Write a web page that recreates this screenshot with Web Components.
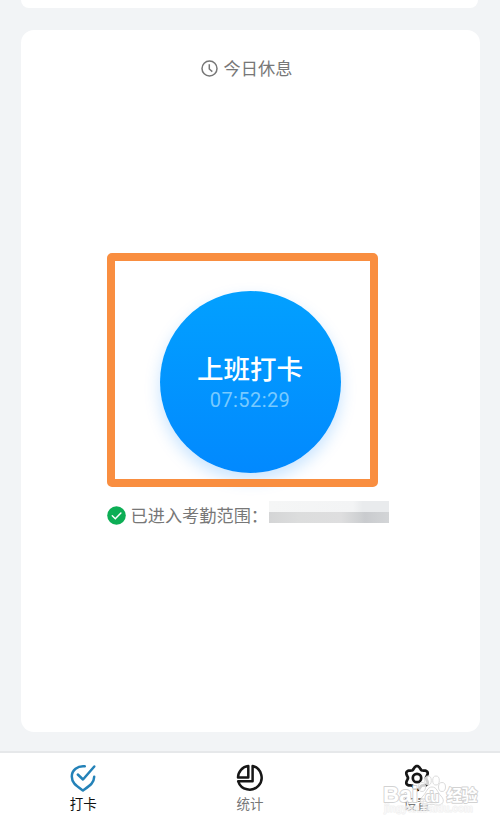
<!DOCTYPE html>
<html lang="zh-CN">
<head>
<meta charset="UTF-8">
<title>打卡</title>
<style>
    html, body {
        margin: 0;
        height: 100%;
        overflow: hidden;
    }
    body {
        font-family: "Noto Sans CJK SC", sans-serif;
        color: #777;
        background: #f2f4f6;
    }
</style>
</head>
<body>
<punch-app>
    <punch-card>
        <rest-status slot="head">今日休息</rest-status>
        <punch-button time="07:52:29">上班打卡</punch-button>
        <range-status slot="foot">已进入考勤范围：</range-status>
    </punch-card>
    <tab-bar slot="nav">
        <tab-item icon="punch" active>打卡</tab-item>
        <tab-item icon="stats">统计</tab-item>
        <tab-item icon="settings">设置</tab-item>
        <water-mark slot="overlay"></water-mark>
    </tab-bar>
</punch-app>

<script>
class PunchApp extends HTMLElement {
    constructor() {
        super();
        this.attachShadow({ mode: 'open' }).innerHTML = `
            <style>
                :host {
                    display: flex;
                    flex-direction: column;
                    width: 500px;
                    height: 827px;
                    overflow: hidden;
                }
                .prev {
                    flex: none;
                    height: 8px;
                    margin: 0 22px 22px 21px;
                    border-radius: 0 0 8px 8px;
                    background: #fff;
                }
                main {
                    flex: 1;
                    display: flex;
                    padding: 0 20px 19px 21px;
                }
            </style>
            <div class="prev"></div>
            <main><slot></slot></main>
            <slot name="nav"></slot>
        `;
    }
}

class PunchCard extends HTMLElement {
    constructor() {
        super();
        this.attachShadow({ mode: 'open' }).innerHTML = `
            <style>
                :host {
                    flex: 1;
                    display: flex;
                    flex-direction: column;
                    align-items: center;
                    background: #fff;
                    border-radius: 13px;
                }
                .head { margin: 26px 8px 0 0; }
                .body { margin: 211px 1px 0 0; }
                .foot { margin: 30px 0 0 26px; }
            </style>
            <div class="head"><slot name="head"></slot></div>
            <div class="body"><slot></slot></div>
            <div class="foot"><slot name="foot"></slot></div>
        `;
    }
}

class RestStatus extends HTMLElement {
    constructor() {
        super();
        this.attachShadow({ mode: 'open' }).innerHTML = `
            <style>
                :host {
                    display: flex;
                    align-items: center;
                    gap: 6px;
                    height: 24px;
                    font-size: 17.2px;
                    line-height: 24px;
                }
                svg { display: block; }
            </style>
            <svg width="17" height="17" viewBox="0 0 17 17" fill="none" stroke="#777" stroke-width="1.5">
                <circle cx="8.5" cy="8.5" r="7.5"/>
                <path d="M8.3 4.3V9l3 2.6"/>
            </svg>
            <span><slot></slot></span>
        `;
    }
}

class PunchButton extends HTMLElement {
    static get observedAttributes() {
        return ['time'];
    }

    constructor() {
        super();
        this.attachShadow({ mode: 'open' }).innerHTML = `
            <style>
                :host {
                    display: block;
                    position: relative;
                }
                .round {
                    display: flex;
                    flex-direction: column;
                    align-items: center;
                    box-sizing: border-box;
                    width: 181px;
                    height: 182px;
                    padding-top: 59px;
                    border-radius: 50%;
                    background: linear-gradient(#02a0ff, #0289fe);
                    box-shadow: 0 7px 16px rgba(0, 130, 255, .22);
                }
                .label {
                    height: 37px;
                    font-size: 26.5px;
                    font-weight: 500;
                    line-height: 36px;
                    color: #fff;
                }
                .time {
                    height: 26px;
                    font: 400 20px/27px Roboto, sans-serif;
                    letter-spacing: .4px;
                    color: #78caff;
                }
                /* highlight frame drawn over the button */
                .frame {
                    position: absolute;
                    left: -53px;
                    top: -38px;
                    box-sizing: border-box;
                    width: 271px;
                    height: 234px;
                    border: 8.5px solid #f98e40;
                    border-radius: 5px;
                }
            </style>
            <div class="round">
                <span class="label"><slot></slot></span>
                <span class="time"></span>
            </div>
            <div class="frame"></div>
        `;
    }

    attributeChangedCallback(name, oldValue, newValue) {
        this.shadowRoot.querySelector('.time').textContent = newValue;
    }
}

class RangeStatus extends HTMLElement {
    constructor() {
        super();
        this.attachShadow({ mode: 'open' }).innerHTML = `
            <style>
                :host {
                    display: flex;
                    align-items: center;
                    width: 314px;
                    height: 24px;
                    font-size: 17.2px;
                    line-height: 24px;
                    white-space: nowrap;
                }
                svg { display: block; margin-right: 5px; }
                .mask {
                    width: 120px;
                    height: 22px;
                    margin: -7px 0 0 1px;
                    background:
                        linear-gradient(90deg, #d4d5d6, #dcdddd 25%, #dededf 60%, #ced0d2 76%, #c9cbce 80%, #d3d5d7) 0 11px / 100% 11px no-repeat,
                        linear-gradient(90deg, #f5f6f6, #f3f4f5 70%, #e9ebed 78%, #e9ebed);
                }
            </style>
            <svg width="19" height="19" viewBox="0 0 19 19">
                <circle cx="9.5" cy="9.5" r="9.3" fill="#0cae55"/>
                <path d="M5.3 9.8l3 2.9 5.6-5.7" fill="none" stroke="#fff" stroke-width="1.5" stroke-linecap="round"/>
            </svg>
            <span><slot></slot></span>
            <div class="mask"></div>
        `;
    }
}

class TabBar extends HTMLElement {
    constructor() {
        super();
        this.attachShadow({ mode: 'open' }).innerHTML = `
            <style>
                :host {
                    display: flex;
                    position: relative;
                    flex: none;
                    box-sizing: border-box;
                    height: 76px;
                    border-top: 2px solid #e6e8ea;
                    background: #fff;
                }
            </style>
            <slot></slot>
            <slot name="overlay"></slot>
        `;
    }
}

// six-lobed outline of the settings gear
function gearPath(cx, cy, radius, depth) {
    const points = [];
    for (let deg = 0; deg < 360; deg += 4) {
        const a = deg * Math.PI / 180;
        const r = radius + depth * Math.cos(6 * a);
        points.push((cx + r * Math.sin(a)).toFixed(2) + ' ' + (cy - r * Math.cos(a)).toFixed(2));
    }
    return 'M' + points.join('L') + 'z';
}

const ICONS = {
    punch: `
        <g fill="none" stroke="#2482b8" stroke-width="2.5" stroke-linecap="round" stroke-linejoin="round">
            <path d="M16.8 3.3C9.5 2.500 3.800 7 3.800 13.500c0 6.300 4 8.800 11.200 14C22.200 22.300 26 20 26.200 13.800"/>
            <path d="M9.800 11.500l5.200 5L26.300 3.500"/>
        </g>`,
    stats: `
        <g fill="none" stroke="#161616" stroke-width="2.5" stroke-linejoin="round">
            <path d="M13.300 3v11.500H3A11.700 11.700 0 0 1 13.300 3z"/>
            <path d="M17.600 3A12 12 0 1 1 3.200 18.300H17.600z"/>
        </g>`,
    settings: `
        <g fill="none" stroke="#161616" stroke-width="2.700" stroke-linejoin="round">
            <path d="${gearPath(15, 15, 10.5, 1.5)}"/>
            <circle cx="15" cy="15" r="4.200"/>
        </g>`
};

class TabItem extends HTMLElement {
    constructor() {
        super();
        this.attachShadow({ mode: 'open' });
    }

    connectedCallback() {
        this.shadowRoot.innerHTML = `
            <style>
                :host {
                    flex: 1;
                    display: flex;
                    flex-direction: column;
                    align-items: center;
                    padding-top: 10px;
                    font-size: 13.500px;
                    line-height: 20px;
                    color: #777;
                }
                :host([active]) { color: #111; }
                svg { display: block; }
            </style>
            <svg width="30" height="30" viewBox="0 0 30 30">${ICONS[this.getAttribute('icon')]}</svg>
            <span><slot></slot></span>
        `;
    }
}

class WaterMark extends HTMLElement {
    constructor() {
        super();
        this.attachShadow({ mode: 'open' }).innerHTML = `
            <style>
                :host {
                    position: absolute;
                    left: 380px;
                    top: 18px;
                    width: 110px;
                    height: 50px;
                }
                svg { display: block; }
                text { paint-order: stroke; stroke-linejoin: round; }
            </style>
            <svg width="110" height="50" viewBox="0 0 110 50">
                <g fill="#fff" fill-opacity=".8" stroke="#dcdcdc" stroke-width="1">
                    <ellipse cx="42" cy="16" rx="3.500" ry="4.500"/>
                    <ellipse cx="48" cy="9.500" rx="3.300" ry="4.500"/>
                    <ellipse cx="56" cy="9.500" rx="3.300" ry="4.500"/>
                    <ellipse cx="62" cy="16" rx="3.500" ry="4.500"/>
                    <path d="M52 16c5 0 5 5 9 9 5 5 1 10-4 9-4-1-6-1-10 0-6 1-9-4-4-9 4-4 4-9 9-9z"/>
                </g>
                <g stroke="#d2d2d2" stroke-width="1.800" fill="#fff">
                    <text x="3" y="31" font-family="Liberation Sans, sans-serif" font-weight="700" font-size="22" textLength="35" lengthAdjust="spacingAndGlyphs">Bai</text>
                    <text x="45" y="31" font-family="Liberation Sans, sans-serif" font-weight="700" font-size="14" textLength="14">du</text>
                    <text x="66.500" y="30" font-family="Noto Sans CJK SC, sans-serif" font-weight="700" font-size="16" textLength="31">经验</text>
                    <text x="4" y="41" font-family="Liberation Sans, sans-serif" font-weight="700" font-size="10" stroke="#e8e8e8" stroke-width="1" stroke-opacity=".7" fill-opacity=".5" textLength="89">jingyan.baidu.com</text>
                </g>
            </svg>
        `;
    }
}

customElements.define('punch-app', PunchApp);
customElements.define('punch-card', PunchCard);
customElements.define('rest-status', RestStatus);
customElements.define('punch-button', PunchButton);
customElements.define('range-status', RangeStatus);
customElements.define('tab-bar', TabBar);
customElements.define('tab-item', TabItem);
customElements.define('water-mark', WaterMark);
</script>
</body>
</html>
